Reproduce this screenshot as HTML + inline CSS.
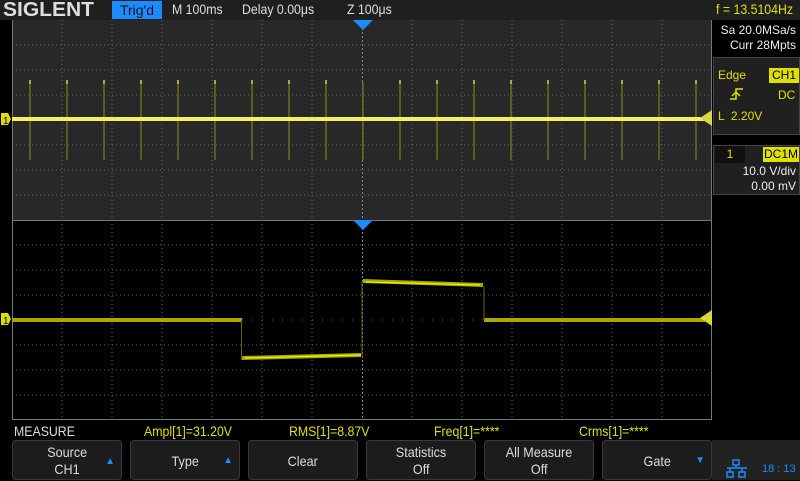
<!DOCTYPE html>
<html><head><meta charset="utf-8"><style>
*{margin:0;padding:0;box-sizing:border-box}
body{width:800px;height:480px;background:#000;overflow:hidden;position:relative;font-family:"Liberation Sans",sans-serif}
.t{position:absolute;white-space:nowrap}
.n{transform:scaleX(0.88);transform-origin:left}
.nr{transform:scaleX(0.88);transform-origin:right}
.btn{position:absolute;top:440px;width:110px;height:40px;background:#1c1c1c;border:1px solid #3a3a3a;border-radius:4px;color:#ddd;font-size:14px;text-align:center;line-height:17px}
.btn span.l{display:inline-block;transform:scaleX(0.9)}
</style></head><body>
<div style="position:absolute;left:0;top:0;width:800px;height:20px;background:#1f1f1f"></div>
<div class="t" style="left:3px;top:-1px;font-size:20px;font-weight:bold;color:#ddd;transform:scaleX(1.05);transform-origin:left">SIGLENT</div>
<div class="t" style="left:112px;top:1px;width:50px;height:18px;background:#1a8cff;color:#111;font-size:14px;text-align:center;line-height:18px">Trig'd</div>
<div class="t n" style="left:172px;top:1px;font-size:14px;color:#ddd">M 100ms</div>
<div class="t n" style="left:242px;top:1px;font-size:14px;color:#ddd">Delay 0.00μs</div>
<div class="t n" style="left:347px;top:1px;font-size:14px;color:#ddd">Z 100μs</div>
<div class="t n" style="left:716px;top:1px;font-size:14px;color:#e0e000">f = 13.5104Hz</div>

<svg style="position:absolute;left:0;top:20px" width="712" height="400">
<rect x="12" y="0" width="700" height="200" fill="#282828"/>
<rect x="12" y="200" width="700" height="200" fill="#000"/>
<g stroke="#666" stroke-width="1" stroke-dasharray="1,3">
<path d="M62 0V400M112 0V400M162 0V400M212 0V400M262 0V400M312 0V400M412 0V400M462 0V400M512 0V400M562 0V400M612 0V400M662 0V400"/>
<path d="M12 25H712M12 50H712M12 75H712M12 125H712M12 150H712M12 175H712M12 225H712M12 250H712M12 275H712M12 325H712M12 350H712M12 375H712"/>
<path d="M12 100H712M12 300H712" stroke-dasharray="1,9"/>
</g>
<path d="M362.5 0V400" stroke="#888" stroke-width="1" stroke-dasharray="2,2"/>
<path d="M12.5 0V400M12 200.5H712M711.5 0V400M12 399.5H712" stroke="#777" stroke-width="1"/>
<g stroke="#6a6a20" stroke-width="1.5">
<path d="M30 62V140M67 62V140M104 62V140M141 62V140M178 62V140M215 62V140M252 62V140M289 62V140M326 62V140M363 62V140M400 62V140M437 62V140M474 62V140M511 62V140M548 62V140M585 62V140M622 62V140M659 62V140M696 62V140"/>
</g>
<g stroke="#d0d040" stroke-width="1.5"><path d="M30 60v4M67 60v4M104 60v4M141 60v4M178 60v4M215 60v4M252 60v4M289 60v4M326 60v4M400 60v4M437 60v4M474 60v4M511 60v4M548 60v4M585 60v4M622 60v4M659 60v4M696 60v4"/></g>
<rect x="12" y="97" width="694" height="4" fill="#f0f060"/>
<path d="M12 300H242 M242 338L361 335 M363 261L483 265 M484 300H705" fill="none" stroke="#a8a800" stroke-width="4"/>
<path d="M245 338L361 335M366 262L480 265" stroke="#f0f000" stroke-width="1.2"/>
<path d="M241.5 300V340M362 336V261M484 266V300" stroke="#666600" stroke-width="1"/>
<path d="M353 0h20l-10 10z M353 200h20l-10 10z" fill="#1a8cff"/>
<path d="M712 90l-12 8 12 8z M712 290l-12 8 12 8z" fill="#d8d840"/>
</svg>
<svg style="position:absolute;left:0;top:111px" width="12" height="220">
<path d="M1 2h7l3 6-3 6h-7z M1 202h7l3 6-3 6h-7z" fill="#e0e000"/>
<text x="3" y="13" font-size="10" font-family="Liberation Sans" fill="#000">1</text>
<text x="3" y="213" font-size="10" font-family="Liberation Sans" fill="#000">1</text>
</svg>

<div class="t" style="left:718px;top:23px;font-size:12px;color:#eee;line-height:15px;text-align:right;width:78px">Sa 20.0MSa/s<br>Curr 28Mpts</div>
<div style="position:absolute;left:713px;top:57px;width:87px;height:78px;background:#202020;border:1px solid #444"></div>
<div class="t" style="left:718px;top:68px;font-size:12px;color:#e0e000">Edge</div>
<div class="t" style="left:769px;top:68px;width:30px;height:15px;background:#e0e000;color:#000;font-size:12px;text-align:center;line-height:15px">CH1</div>
<svg style="position:absolute;left:729px;top:87px" width="16" height="16"><path d="M1 12h6v-10h7M3 9l4-4 4 4" fill="none" stroke="#e0e000" stroke-width="1.5"/></svg>
<div class="t" style="left:778px;top:88px;font-size:12px;color:#e0e000">DC</div>
<div class="t" style="left:718px;top:109px;font-size:12px;color:#e0e000">L &nbsp;2.20V</div>
<div style="position:absolute;left:713px;top:145px;width:87px;height:50px;background:#202020;border:1px solid #444"></div>
<div class="t" style="left:715px;top:146px;width:30px;height:17px;background:#111;color:#e0e000;font-size:12px;text-align:center;line-height:17px">1</div>
<div class="t" style="left:763px;top:147px;width:36px;height:15px;background:#e0e000;color:#000;font-size:12px;text-align:center;line-height:15px">DC1M</div>
<div class="t" style="left:718px;top:164px;width:78px;font-size:12px;color:#eee;text-align:right;line-height:15px">10.0 V/div<br>0.00 mV</div>

<div class="t n" style="left:14px;top:423px;font-size:14px;color:#ddd">MEASURE</div>
<div class="t n" style="left:144px;top:423px;font-size:14px;color:#e0e000">Ampl[1]=31.20V</div>
<div class="t n" style="left:289px;top:423px;font-size:14px;color:#e0e000">RMS[1]=8.87V</div>
<div class="t n" style="left:434px;top:423px;font-size:14px;color:#e0e000">Freq[1]=****</div>
<div class="t n" style="left:579px;top:423px;font-size:14px;color:#e0e000">Crms[1]=****</div>

<div class="btn" style="left:12px;padding-top:3px"><span class="l">Source</span><br><span class="l">CH1</span><span style="position:absolute;right:6px;top:12px;color:#1a8cff;font-size:10px">▲</span></div>
<div class="btn" style="left:130px;line-height:40px"><span class="l">Type</span><span style="position:absolute;right:6px;top:0;color:#1a8cff;font-size:10px">▲</span></div>
<div class="btn" style="left:248px;line-height:40px"><span class="l">Clear</span></div>
<div class="btn" style="left:366px;padding-top:3px"><span class="l">Statistics</span><br><span class="l">Off</span></div>
<div class="btn" style="left:484px;padding-top:3px"><span class="l">All Measure</span><br><span class="l">Off</span></div>
<div class="btn" style="left:602px;line-height:40px"><span class="l">Gate</span><span style="position:absolute;right:6px;top:0;color:#1a8cff;font-size:10px">▼</span></div>
<div style="position:absolute;left:712px;top:440px;width:88px;height:40px;background:#222"></div>
<svg style="position:absolute;left:726px;top:459px" width="22" height="20"><g fill="none" stroke="#1a8cff" stroke-width="1.5"><rect x="7" y="1" width="6" height="5"/><rect x="1" y="13" width="6" height="5"/><rect x="13" y="13" width="6" height="5"/><path d="M10 6v3M1 9h20M4 9v4M16 9v4"/></g></svg>
<div class="t" style="left:762px;top:463px;font-size:11px;color:#1a8cff">18 : 13</div>
</body></html>
